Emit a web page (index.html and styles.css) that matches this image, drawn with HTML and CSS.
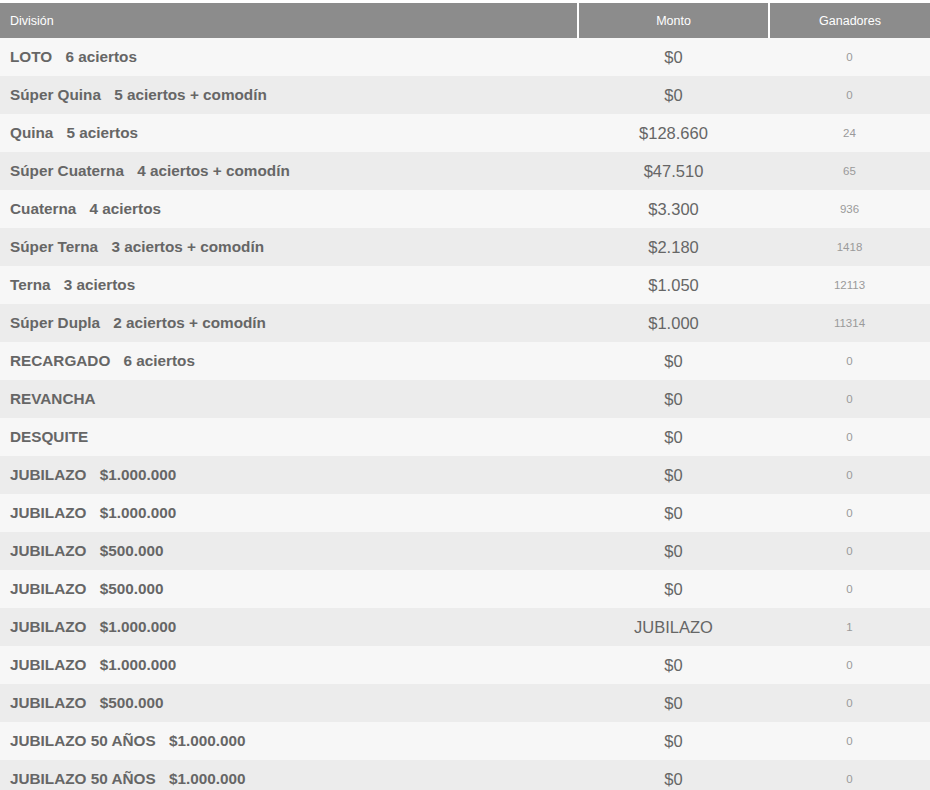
FILE: index.html
```html
<!DOCTYPE html>
<html lang="es">
<head>
<meta charset="utf-8">
<title>Premios</title>
<link rel="stylesheet" href="styles.css">
</head>
<body>
<table class="prizes">
  <thead>
    <tr>
      <th class="col-div">División</th>
      <th class="col-monto">Monto</th>
      <th class="col-gan">Ganadores</th>
    </tr>
  </thead>
  <tbody>
    <tr><td class="div">LOTO <span class="sub">6 aciertos</span></td><td class="monto">$0</td><td class="gan">0</td></tr>
    <tr><td class="div">Súper Quina <span class="sub">5 aciertos + comodín</span></td><td class="monto">$0</td><td class="gan">0</td></tr>
    <tr><td class="div">Quina <span class="sub">5 aciertos</span></td><td class="monto">$128.660</td><td class="gan">24</td></tr>
    <tr><td class="div">Súper Cuaterna <span class="sub">4 aciertos + comodín</span></td><td class="monto">$47.510</td><td class="gan">65</td></tr>
    <tr><td class="div">Cuaterna <span class="sub">4 aciertos</span></td><td class="monto">$3.300</td><td class="gan">936</td></tr>
    <tr><td class="div">Súper Terna <span class="sub">3 aciertos + comodín</span></td><td class="monto">$2.180</td><td class="gan">1418</td></tr>
    <tr><td class="div">Terna <span class="sub">3 aciertos</span></td><td class="monto">$1.050</td><td class="gan">12113</td></tr>
    <tr><td class="div">Súper Dupla <span class="sub">2 aciertos + comodín</span></td><td class="monto">$1.000</td><td class="gan">11314</td></tr>
    <tr><td class="div">RECARGADO <span class="sub">6 aciertos</span></td><td class="monto">$0</td><td class="gan">0</td></tr>
    <tr><td class="div">REVANCHA</td><td class="monto">$0</td><td class="gan">0</td></tr>
    <tr><td class="div">DESQUITE</td><td class="monto">$0</td><td class="gan">0</td></tr>
    <tr><td class="div">JUBILAZO <span class="sub">$1.000.000</span></td><td class="monto">$0</td><td class="gan">0</td></tr>
    <tr><td class="div">JUBILAZO <span class="sub">$1.000.000</span></td><td class="monto">$0</td><td class="gan">0</td></tr>
    <tr><td class="div">JUBILAZO <span class="sub">$500.000</span></td><td class="monto">$0</td><td class="gan">0</td></tr>
    <tr><td class="div">JUBILAZO <span class="sub">$500.000</span></td><td class="monto">$0</td><td class="gan">0</td></tr>
    <tr><td class="div">JUBILAZO <span class="sub">$1.000.000</span></td><td class="monto">JUBILAZO</td><td class="gan">1</td></tr>
    <tr><td class="div">JUBILAZO <span class="sub">$1.000.000</span></td><td class="monto">$0</td><td class="gan">0</td></tr>
    <tr><td class="div">JUBILAZO <span class="sub">$500.000</span></td><td class="monto">$0</td><td class="gan">0</td></tr>
    <tr><td class="div">JUBILAZO 50 AÑOS <span class="sub">$1.000.000</span></td><td class="monto">$0</td><td class="gan">0</td></tr>
    <tr><td class="div">JUBILAZO 50 AÑOS <span class="sub">$1.000.000</span></td><td class="monto">$0</td><td class="gan">0</td></tr>
  </tbody>
</table>
</body>
</html>
```
FILE: styles.css
```css
html, body {
  margin: 0;
  padding: 0;
  background: #ffffff;
}
body {
  padding-top: 3px;
  font-family: "Liberation Sans", Arial, sans-serif;
  color: #666666;
}
.prizes {
  width: 930px;
  border-collapse: collapse;
  border-spacing: 0;
  table-layout: fixed;
}
.prizes th {
  background: #8c8c8c;
  color: #ffffff;
  font-weight: normal;
  font-size: 12.5px;
  height: 35px;
  padding: 0;
  vertical-align: middle;
}
.prizes th + th {
  border-left: 2px solid #ffffff;
}
.col-div {
  width: 578px;
  text-align: left;
  padding-left: 10px !important;
  box-sizing: border-box;
}
.col-monto {
  width: 189px;
  text-align: center;
}
.col-gan {
  text-align: center;
}
.prizes td {
  height: 38px;
  padding: 0;
  vertical-align: middle;
}
.prizes tbody tr:nth-child(odd) td {
  background: #f7f7f7;
}
.prizes tbody tr:nth-child(even) td {
  background: #ececec;
}
.div {
  padding-left: 10px !important;
  font-size: 15.3px;
  font-weight: bold;
  color: #666666;
  white-space: nowrap;
}
.sub {
  margin-left: 9px;
}
.monto {
  text-align: center;
  font-size: 16.5px;
  color: #666666;
}
.gan {
  text-align: center;
  font-size: 11.5px;
  color: #9a9a9a;
}
```
